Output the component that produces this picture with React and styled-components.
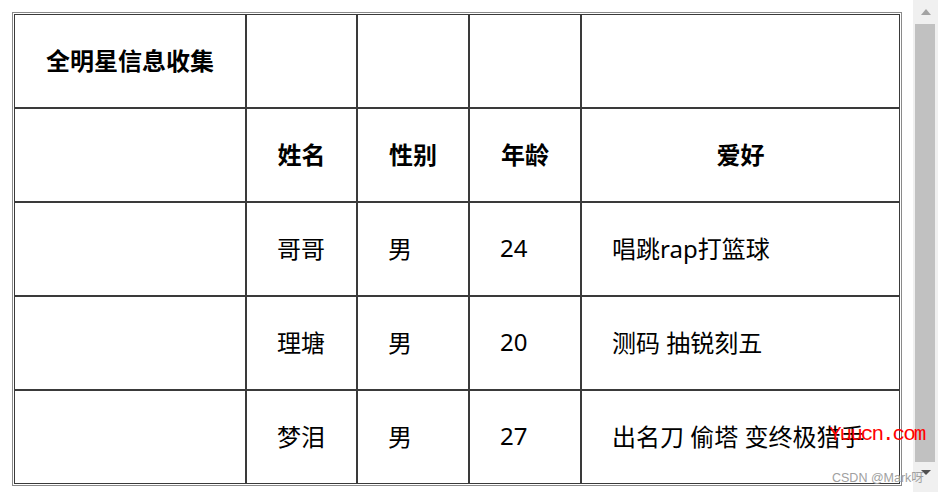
import styled, { createGlobalStyle } from 'styled-components'

const GlobalStyle = createGlobalStyle`
  html, body {
    margin: 0;
    padding: 0;
    overflow: hidden;
    background: #fff;
  }
`

const Page = styled.div`
  position: relative;
  display: flex;
  width: 938px;
  height: 492px;
  font-family: "Noto Sans", "Noto Sans CJK SC", sans-serif;
  color: #111;
`

const Content = styled.div`
  flex: 1;
  padding: 12px;
  overflow: hidden;
`

const Table = styled.table`
  border: 1px solid #8a8a8a;
  padding: 1px;
  border-collapse: separate;
  border-spacing: 0;
  table-layout: fixed;
  width: 890px;
`

const Col = styled.col`
  width: ${(props) => props.w}px;
`

const Row = styled.tr`
  height: 94px;
`

const Cell = styled.td`
  border: 1px solid #3a3a3a;
  padding: 0 0 3px ${(props) => (props.head ? 0 : 30)}px;
  text-align: ${(props) => (props.head ? 'center' : 'left')};
  vertical-align: middle;
  font-size: 24px;
  font-weight: ${(props) => (props.head ? 700 : 400)};
  color: #000;
  white-space: nowrap;
`

const Scrollbar = styled.div`
  width: 25px;
  display: flex;
  flex-direction: column;
  background: #f0f0f0;
`

const ArrowButton = styled.div`
  height: ${(props) => props.h}px;
  display: flex;
  align-items: ${(props) => (props.down ? 'flex-start' : 'center')};
  justify-content: center;
  padding-top: ${(props) => (props.down ? 8 : 0)}px;
  box-sizing: border-box;
`

const Triangle = styled.div`
  width: 0;
  height: 0;
  border-left: 5px solid transparent;
  border-right: 5px solid transparent;
  ${(props) =>
    props.down
      ? 'border-top: 5px solid #505050;'
      : 'border-bottom: 6px solid #a3a3a3;'}
`

const Thumb = styled.div`
  flex: 1;
  margin: 1px 3px 0 2px;
  background: #c1c1c1;
`

const SiteMark = styled.div`
  position: absolute;
  left: 829px;
  top: 423px;
  font-family: "Liberation Mono", monospace;
  font-size: 21px;
  letter-spacing: -2px;
  color: #ff0000;
`

const AuthorMark = styled.div`
  position: absolute;
  left: 832px;
  top: 467px;
  font-family: "Liberation Sans", "Noto Sans CJK SC", sans-serif;
  font-size: 12.5px;
  color: #a0a0a0;
`

const rows = [
  ['哥哥', '男', '24', '唱跳rap打篮球'],
  ['理塘', '男', '20', '测码 抽锐刻五'],
  ['梦泪', '男', '27', '出名刀 偷塔 变终极猎手'],
]

export default function App() {
  return (
    <Page>
      <GlobalStyle />
      <Content>
        <Table>
          <colgroup>
            {[232, 111, 112, 112, 319].map((w, i) => (
              <Col key={i} w={w} />
            ))}
          </colgroup>
          <tbody>
            <Row>
              <Cell head>全明星信息收集</Cell>
              <Cell head />
              <Cell head />
              <Cell head />
              <Cell head />
            </Row>
            <Row>
              <Cell head />
              <Cell head>姓名</Cell>
              <Cell head>性别</Cell>
              <Cell head>年龄</Cell>
              <Cell head>爱好</Cell>
            </Row>
            {rows.map((r, i) => (
              <Row key={i}>
                <Cell />
                {r.map((v, j) => (
                  <Cell key={j}>{v}</Cell>
                ))}
              </Row>
            ))}
          </tbody>
        </Table>
      </Content>
      <Scrollbar>
        <ArrowButton h={23}>
          <Triangle />
        </ArrowButton>
        <Thumb />
        <ArrowButton h={30} down>
          <Triangle down />
        </ArrowButton>
      </Scrollbar>
      <SiteMark>Yuucn.com</SiteMark>
      <AuthorMark>CSDN @Mark呀</AuthorMark>
    </Page>
  )
}
